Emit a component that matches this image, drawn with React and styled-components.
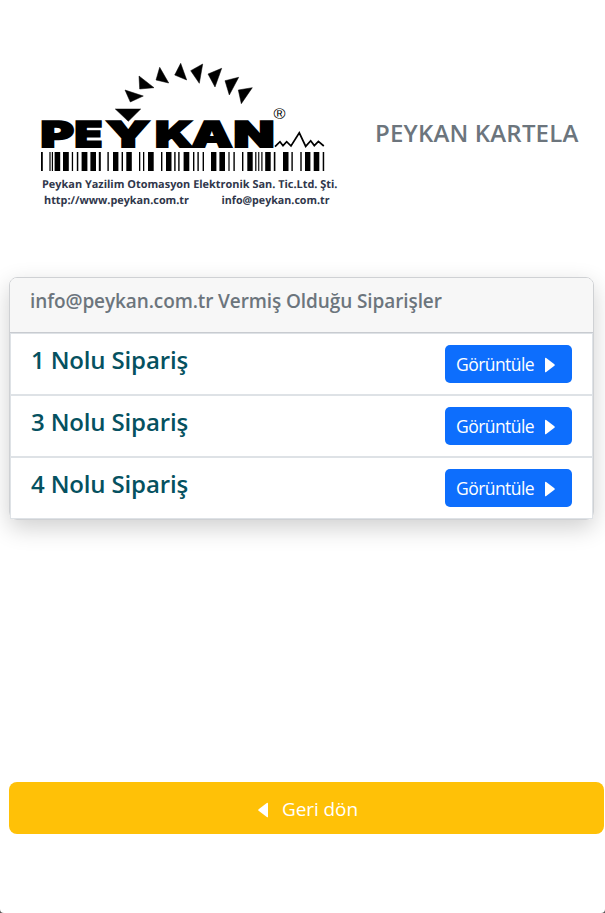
import React from "react";
import styled, { createGlobalStyle } from "styled-components";

const GlobalStyle = createGlobalStyle`
  *, *::before, *::after { box-sizing: border-box; }
  html { background: #555; }
  body {
    margin: 0;
    font-family: "Open Sans", "Noto Sans", sans-serif;
    font-size: 18px;
    line-height: 1.5;
    color: #212529;
  }
`;

const Page = styled.div`
  display: flex;
  flex-direction: column;
  height: 913px;
  padding-left: 9px;
  overflow: hidden;
  background: #fff;
  border-radius: 0 0 4px 4px;
`;

const Header = styled.header`
  display: flex;
  align-items: center;
  height: 277px;
`;

const Logo = styled.svg`
  display: block;
  flex: none;
  width: 341px;
  height: 277px;
`;

const BrandTitle = styled.h4`
  margin: 0 0 11px 25px;
  font-size: 24px;
  font-weight: 600;
  line-height: 1.2;
  letter-spacing: 0.18px;
  white-space: nowrap;
  color: #6c757d;
`;

const Card = styled.section`
  width: 585px;
  height: 243px;
  flex: none;
  border: 1px solid #cfd1d4;
  border-radius: 8px;
  box-shadow: 0 8px 23px rgba(0, 0, 0, 0.19);
`;

const CardHeader = styled.div`
  height: 55px;
  padding: 11px 20px;
  background: #f7f7f7;
  border-bottom: 1px solid #c8cbd0;
  border-radius: 7px 7px 0 0;
`;

const CardTitle = styled.h5`
  margin: 0;
  font-size: 19px;
  font-weight: 600;
  line-height: 24px;
  letter-spacing: -0.1px;
  white-space: nowrap;
  color: #6c757d;
`;

const OrderList = styled.ul`
  margin: 0;
  padding: 0;
  list-style: none;
  background: #fff;
  border: solid #dee2e6;
  border-width: 1px 1px 0;
`;

const OrderRow = styled.li`
  display: flex;
  align-items: flex-start;
  justify-content: space-between;
  height: 62px;
  padding: 11px 20px 0 20px;
  border-bottom: 2px solid #dee2e6;

  &:last-child {
    height: 61px;
    border-bottom-width: 1px;
  }
`;

const OrderName = styled.h4`
  margin: 0;
  font-size: 24px;
  font-weight: 600;
  line-height: 30px;
  letter-spacing: -0.15px;
  white-space: nowrap;
  color: #055160;
`;

const ViewButton = styled.button`
  display: flex;
  align-items: center;
  width: 127px;
  height: 38px;
  padding: 0 0 0 11px;
  border: 0;
  border-radius: 5px;
  background: #0d6efd;
  color: #fff;
  font: 400 17.5px "Open Sans", "Noto Sans", sans-serif;
  letter-spacing: -0.55px;
`;

const BackButton = styled.button`
  display: flex;
  align-items: center;
  justify-content: center;
  flex: none;
  gap: 14px;
  width: 595px;
  height: 52px;
  margin-top: 262px;
  padding: 1px 0 0 3px;
  border: 0;
  border-radius: 8px;
  background: #ffc107;
  color: #fff;
  font: 400 19px "Open Sans", "Noto Sans", sans-serif;
  letter-spacing: -0.1px;
`;

const Caret = styled.svg`
  flex: none;
  width: 10px;
  height: 16px;
  margin-left: ${(p) => p.$offset || "0"};
  margin-top: 2px;
  fill: #fff;
`;

/* Each entry is [left, width] of one barcode stripe. */
const BARS = [
  [41, 1.8], [49.4, 1.2], [51.8, 1.2], [54.6, 5.6], [63, 5.8], [71.8, 1.3],
  [76.8, 1.5], [81.6, 5.8], [90.4, 5.6], [98.8, 2], [107.4, 1.4], [113, 5.4],
  [121.6, 1.4], [126.3, 5.5], [139, 1.3], [143, 1.3], [148, 5.7], [161, 1.4],
  [166, 5.5], [174.2, 1.4], [178.2, 1.4], [183.6, 5.7], [193, 1.4], [197.4, 1.4],
  [202.6, 1.4], [211, 5.4], [219.4, 5.6], [228.4, 1.2], [233.4, 1.4], [242, 1.4],
  [247.3, 5.4], [255.2, 1.2], [258.2, 1.1], [261.3, 1.2], [265.2, 5.5],
  [273.8, 1.6], [283, 5.5], [291.4, 1.4], [300.3, 1.4], [305, 5.4],
  [313.7, 5.6], [322.7, 1.5],
];

const RAYS = [
  "125,90 143.3,96 130.3,102",
  "139,76 154,87.7 139.7,89",
  "159.7,67.3 168.7,83 156,80",
  "180.7,63.3 186.7,80 174.7,75",
  "202.7,64 199.3,83.3 190.7,70.7",
  "221.7,68.3 215,87 208,74",
  "238.7,77.3 229.3,95 225,80.7",
  "252.3,87.7 241.3,103.7 238.3,90",
  "115.3,109 140.7,109 128.3,121.3",
];

/* Wordmark letters: [character, left, width]. */
const LETTERS = [
  ["P", 40.5, 33.5], ["E", 74.5, 28], ["Y", 106, 44],
  ["K", 155, 38], ["A", 191.5, 41], ["N", 233.5, 41],
];

function PeykanLogo() {
  return (
    <Logo viewBox="9 0 341 277" role="img" aria-label="Peykan">
      {RAYS.map((points) => (
        <polygon key={points} points={points} stroke="#000" strokeWidth="0.5" />
      ))}
      <g
        fontFamily="Inter, sans-serif"
        fontWeight="900"
        fontSize="35.5"
        stroke="#000"
        strokeWidth="1.8"
        textRendering="geometricPrecision"
      >
        {LETTERS.map(([char, x, width]) => (
          <text key={char} x={x} y="146.5" textLength={width} lengthAdjust="spacingAndGlyphs">{char}</text>
        ))}
      </g>
      <text x="273.5" y="119" fontFamily="Liberation Sans, sans-serif" fontSize="15" textLength="12" lengthAdjust="spacingAndGlyphs">®</text>
      <path
        d="M275 146.7 L280 141.7 L283 145.7 L286.7 141.7 L291 146 L299.3 132.8 L305.7 146.4 L310.7 140.8 L314.3 145.6 L318.4 141.4 L323.8 146"
        fill="none" stroke="#000" strokeWidth="1.7"
      />
      {BARS.map(([x, width]) => <rect key={x} x={x} y="152" width={width} height="19" />)}
      <g fontFamily="Open Sans, sans-serif" fontWeight="700" fontSize="11" fill="#30374b" textRendering="geometricPrecision">
        <text x="42" y="188.3" textLength="295.5" lengthAdjust="spacingAndGlyphs">Peykan Yazilim Otomasyon Elektronik San. Tic.Ltd. Şti.</text>
        <text x="44" y="204.3" textLength="145" lengthAdjust="spacingAndGlyphs">http://www.peykan.com.tr</text>
        <text x="221.5" y="204.3" textLength="108" lengthAdjust="spacingAndGlyphs">info@peykan.com.tr</text>
      </g>
    </Logo>
  );
}

const ORDERS = [1, 3, 4];

export default function App() {
  return (
    <>
      <GlobalStyle />
      <Page>
        <Header>
          <PeykanLogo />
          <BrandTitle>PEYKAN KARTELA</BrandTitle>
        </Header>
        <Card>
          <CardHeader>
            <CardTitle>info@peykan.com.tr Vermiş Olduğu Siparişler</CardTitle>
          </CardHeader>
          <OrderList>
            {ORDERS.map((order) => (
              <OrderRow key={order}>
                <OrderName>{order} Nolu Sipariş</OrderName>
                <ViewButton>
                  Görüntüle
                  <Caret viewBox="0 0 10 16" $offset="10.5px">
                    <path d="M0 1.6 Q0 .2 1.2 1 L9.4 7.2 Q10.2 8 9.4 8.8 L1.2 15 Q0 15.8 0 14.4Z" />
                  </Caret>
                </ViewButton>
              </OrderRow>
            ))}
          </OrderList>
        </Card>
        <BackButton>
          <Caret viewBox="0 0 10 16">
            <path d="M10 1.6 Q10 .2 8.8 1 L.6 7.2 Q-.2 8 .6 8.8 L8.8 15 Q10 15.8 10 14.4Z" />
          </Caret>
          Geri dön
        </BackButton>
      </Page>
    </>
  );
}
